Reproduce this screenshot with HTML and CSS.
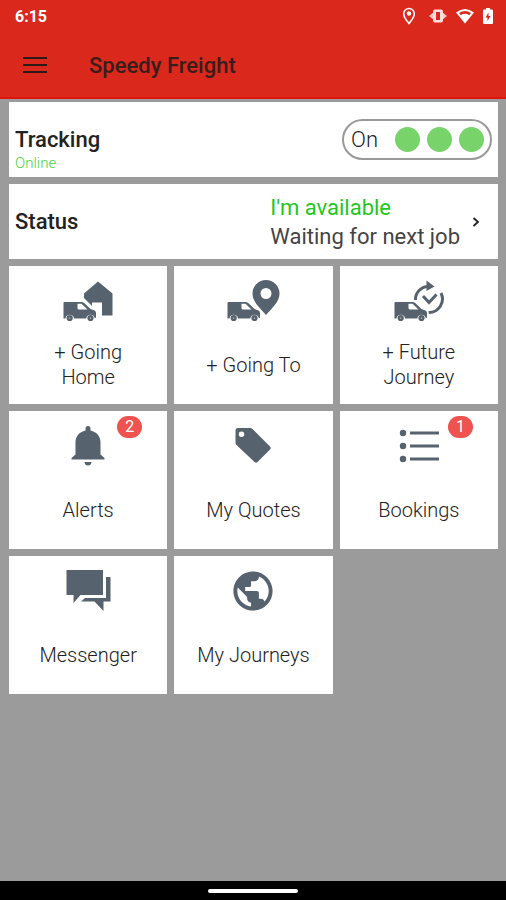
FILE: index.html
```html
<!DOCTYPE html>
<html lang="en">
<head>
    <meta charset="UTF-8">
    <meta name="viewport" content="width=device-width, initial-scale=1.0">
    <title>Speedy Freight</title>
    <link rel="stylesheet" href="styles.css">
</head>
<body>
    <!-- Shared van shape, used by the first row of tiles -->
    <svg class="defs" width="0" height="0" aria-hidden="true">
        <symbol id="van" viewBox="0 0 34 21" overflow="visible">
            <path class="van-body" d="M1.500 1H18.500Q20 1 21.200 2L27.500 8L31.500 9.500Q33 10.200 33 12V16.500L31.800 17.500A4.300 4.300 0 0 0 23.300 17.500H11A4.300 4.300 0 0 0 2.500 17.500H.500V2Q.500 1 1.500 1Z"/>
            <path class="cut" d="M14.500 2.800H18.500L24.500 8.500H15.500L14.500 7.500Z"/>
            <circle cx="6.700" cy="17" r="3.100"/>
            <circle cx="27.500" cy="17" r="3.100"/>
            <circle class="cut" cx="6.700" cy="17" r=".6"/>
            <circle class="cut" cx="27.500" cy="17" r=".6"/>
        </symbol>
    </svg>

    <header class="header">
        <div class="status-bar">
            <span class="time">6:15</span>
            <div class="status-icons">
                <svg width="14" height="18" viewBox="0 0 14 18">
                    <path d="M7 1.500A5.300 5.300 0 0 0 1.700 6.800C1.700 10.500 7 16.500 7 16.500S12.300 10.500 12.300 6.800A5.300 5.300 0 0 0 7 1.500Z" fill="none" stroke="#fff" stroke-width="1.600"/>
                    <circle cx="7" cy="6.500" r="2.200" fill="#fff"/>
                </svg>
                <svg width="20" height="18" viewBox="0 0 20 18">
                    <path d="M6 3H14V5L19 9L14 13V15H6V13L1 9L6 5Z" fill="#ffc9c1"/>
                    <rect x="5" y="2.500" width="10" height="13" rx="2" fill="#ffe0db"/>
                    <rect x="8" y="5" width="4" height="8" fill="#da291c"/>
                </svg>
                <svg width="20" height="18" viewBox="0 0 20 18">
                    <path d="M1 5.500Q10-1.500 19 5.500L10 16.500Z" fill="#fff"/>
                    <path d="M4 6Q10 2 16 6L14.200 8.200Q10 5.500 5.800 8.200Z" fill="#da291c"/>
                </svg>
                <svg width="12" height="18" viewBox="0 0 12 18">
                    <path d="M4 1H8V2.500H10Q11 2.500 11 3.500V16Q11 17 10 17H2Q1 17 1 16V3.500Q1 2.500 2 2.500H4Z" fill="#fff"/>
                    <path d="M6.500 5.500L3.500 10.500H5.500V14L8.500 9H6.500Z" fill="#da291c"/>
                </svg>
            </div>
        </div>
        <div class="app-bar">
            <button class="menu-btn" aria-label="Menu">
                <svg width="24" height="18" viewBox="0 0 24 18">
                    <path d="M0 1H24M0 8H24M0 15H24" stroke="#2a1a18" stroke-width="2"/>
                </svg>
            </button>
            <h1>Speedy Freight</h1>
        </div>
    </header>

    <main class="content">
        <section class="card">
            <div class="tracking">
                <h2>Tracking</h2>
                <p class="online">Online</p>
            </div>
            <button class="toggle" role="switch" aria-checked="true" aria-label="Tracking">
                <span class="toggle-text">On</span>
                <span class="dot"></span>
                <span class="dot"></span>
                <span class="dot"></span>
            </button>
        </section>

        <a class="card status" href="#status">
            <h2>Status</h2>
            <div class="status-text">
                <p class="available">I'm available</p>
                <p>Waiting for next job</p>
            </div>
            <svg class="chevron" width="8" height="12" viewBox="0 0 8 12">
                <path d="M1.500 2L6 6L1.500 10" fill="none" stroke="#222" stroke-width="1.800"/>
            </svg>
        </a>

        <!-- Menu tiles -->
        <nav class="tiles">
            <a class="tile" href="#going-home">
                <svg class="icon" width="54" height="42" viewBox="0 0 54 42">
                    <path d="M37 1.500L51.500 13.500V35.500H41V22.500H31V26L23 18V13.500Z"/>
                    <use href="#van" x="2" y="21" width="34" height="21"/>
                </svg>
                <span class="label">+ Going<br>Home</span>
            </a>
            <a class="tile" href="#going-to">
                <svg class="icon" width="54" height="42" viewBox="0 0 54 42">
                    <path fill-rule="evenodd" d="M40 0A13.500 13.500 0 0 0 26.500 13.500C26.500 22 34 28 40 35C46 28 53.500 22 53.500 13.500A13.500 13.500 0 0 0 40 0ZM40 8A5.500 5.500 0 1 1 40 19A5.500 5.500 0 1 1 40 8Z"/>
                    <use href="#van" x="1" y="21" width="34" height="21"/>
                </svg>
                <span class="label">+ Going To</span>
            </a>
            <a class="tile" href="#future-journey">
                <svg class="icon" width="54" height="42" viewBox="0 0 54 42">
                    <path class="line" d="M23.500 20A13 13 0 0 1 37 6.500M49 13A13.500 13.500 0 0 1 36.500 32.500M31 16L37 22.500L44.500 14.500"/>
                    <path d="M34.500 .5L42.500 6.500L34.500 11Z"/>
                    <use href="#van" x="2" y="21" width="34" height="21"/>
                </svg>
                <span class="label">+ Future<br>Journey</span>
            </a>
            <a class="tile" href="#alerts">
                <svg class="icon" width="54" height="42" viewBox="0 0 54 42">
                    <path d="M27 1Q29.500 1 29.500 4V5.500C36 7 39.500 11.500 39.500 17.500V29.500L43.500 33V34.500H10.500V33L14.500 29.500V17.500C14.500 11.500 18 7 24.500 5.500V4Q24.500 1 27 1ZM23.500 37H30.500Q30 40.500 27 40.500T23.500 37Z"/>
                </svg>
                <span class="label">Alerts</span>
                <span class="badge">2</span>
            </a>
            <a class="tile" href="#quotes">
                <svg class="icon" width="54" height="42" viewBox="0 0 54 42">
                    <path fill-rule="evenodd" d="M12 3H24Q25.500 3 26.500 4L44 21.500Q45.500 23 44 24.500L31.500 37Q30 38.500 28.500 37L11 20.500Q9.500 19 9.500 17.500V6Q9.500 3 12 3ZM15.500 6.500A2.700 2.700 0 1 0 15.500 12A2.700 2.700 0 1 0 15.500 6.500Z"/>
                </svg>
                <span class="label">My Quotes</span>
            </a>
            <a class="tile" href="#bookings">
                <svg class="icon" width="54" height="42" viewBox="0 0 54 42">
                    <circle cx="11" cy="8" r="3.200"/>
                    <circle cx="11" cy="21" r="3.200"/>
                    <circle cx="11" cy="34" r="3.200"/>
                    <path class="line" d="M18 8H47M18 21H47M18 34H47"/>
                </svg>
                <span class="label">Bookings</span>
                <span class="badge">1</span>
            </a>
            <a class="tile" href="#messenger">
                <svg class="icon" width="54" height="42" viewBox="0 0 54 42">
                    <path d="M5.500 0H42V25H19.500L12.500 33V25H5.500Z"/>
                    <path d="M45 7H49.500V31.500H42.500V41L33.500 31.500H20L24 28H45Z"/>
                </svg>
                <span class="label">Messenger</span>
            </a>
            <a class="tile" href="#journeys">
                <svg class="icon" width="54" height="42" viewBox="0 0 54 42">
                    <g transform="translate(3.500 -2.500) scale(1.960)">
                        <path d="M12 2C6.480 2 2 6.480 2 12s4.480 10 10 10 10-4.480 10-10S17.520 2 12 2zm-1 17.930c-3.950-.490-7-3.850-7-7.930 0-.620.080-1.210.210-1.790L9 15v1c0 1.100.900 2 2 2v1.930zm6.900-2.540c-.260-.810-1-1.390-1.900-1.390h-1v-3c0-.550-.450-1-1-1H8v-2h2c.550 0 1-.450 1-1V7h2c1.100 0 2-.900 2-2v-.410c2.930 1.190 5 4.060 5 7.410 0 2.080-.800 3.970-2.100 5.390z"/>
                    </g>
                </svg>
                <span class="label">My Journeys</span>
            </a>
        </nav>
    </main>

    <footer class="nav-bar">
        <span class="handle"></span>
    </footer>
</body>
</html>
```
FILE: styles.css
```css
* {
    box-sizing: border-box;
}

body {
    margin: 0;
    min-height: 100vh;
    display: flex;
    flex-direction: column;
    font-family: Roboto, "Liberation Sans", sans-serif;
    background-color: #9b9b9b;
    color: #222;
}

h1, h2, p {
    margin: 0;
}

a {
    color: inherit;
    text-decoration: none;
}

button {
    font-family: inherit;
    color: inherit;
    cursor: pointer;
}

.defs {
    position: absolute;
}

/* Header */
.header {
    background-color: #da291c;
    border-bottom: 2px solid #dc160c;
}

.status-bar {
    display: flex;
    justify-content: space-between;
    align-items: center;
    height: 32px;
    padding: 0 12px 0 15px;
    color: #fff;
}

.time {
    font-size: 16px;
    font-weight: 700;
}

.status-icons {
    display: flex;
    gap: 7px;
}

.status-icons svg:nth-child(1) {
    margin-right: 5px;
}

.app-bar {
    display: flex;
    align-items: center;
    height: 65px;
    padding: 2px 0 0 23px;
}

.menu-btn {
    display: flex;
    padding: 0;
    border: none;
    background: none;
}

.app-bar h1 {
    margin-left: 42px;
    font-size: 22px;
    font-weight: 500;
    color: #3a1d1a;
}

/* Content */
.content {
    flex: 1;
    display: flex;
    flex-direction: column;
    gap: 7px;
    padding: 3px 8px 20px 9px;
}

.card {
    display: flex;
    align-items: center;
    justify-content: space-between;
    height: 75px;
    padding: 0 6px;
    background-color: #fff;
}

.card h2 {
    font-size: 22px;
    line-height: 26px;
    font-weight: 500;
}

.tracking {
    padding-top: 20px;
}

.online {
    font-size: 15px;
    line-height: 20px;
    font-weight: 300;
    color: #3fd43f;
}

.toggle {
    display: flex;
    align-items: center;
    gap: 7px;
    height: 41px;
    padding: 0 6px 0 7px;
    border: 2px solid #999;
    border-radius: 21px;
    background-color: #fff;
}

.toggle-text {
    margin-right: 10px;
    font-size: 22px;
    font-weight: 300;
}

.dot {
    width: 25px;
    height: 25px;
    border-radius: 50%;
    background-color: #77d36a;
}

.status-text {
    margin-left: auto;
    font-size: 22px;
    line-height: 29px;
    font-weight: 400;
    color: #444;
}

.available {
    color: #1fc71f;
}

.chevron {
    margin: 0 12px;
}

/* Tiles */
.tiles {
    display: grid;
    grid-template-columns: repeat(3, 1fr);
    gap: 7px;
}

.tile {
    position: relative;
    display: flex;
    flex-direction: column;
    align-items: center;
    height: 138px;
    padding-top: 14px;
    background-color: #fff;
}

.icon {
    fill: #56626d;
}

.icon .line {
    fill: none;
    stroke: #56626d;
    stroke-width: 3;
}

/* White outline keeps the van clear of the shape behind it */
.van-body {
    stroke: #fff;
    stroke-width: 3;
    paint-order: stroke;
}

.cut {
    fill: #fff;
}

.label {
    flex: 1;
    display: flex;
    align-items: center;
    padding-top: 4px;
    font-size: 20px;
    line-height: 25px;
    font-weight: 300;
    text-align: center;
}

.badge {
    position: absolute;
    top: 5px;
    right: 25px;
    width: 25px;
    border-radius: 11px;
    background-color: #ee534f;
    color: #fff;
    font-size: 16px;
    line-height: 22px;
    text-align: center;
}

/* System navigation bar */
.nav-bar {
    display: flex;
    justify-content: center;
    align-items: center;
    height: 19px;
    background-color: #000;
}

.handle {
    width: 90px;
    height: 4px;
    border-radius: 2px;
    background-color: #fff;
}
```
